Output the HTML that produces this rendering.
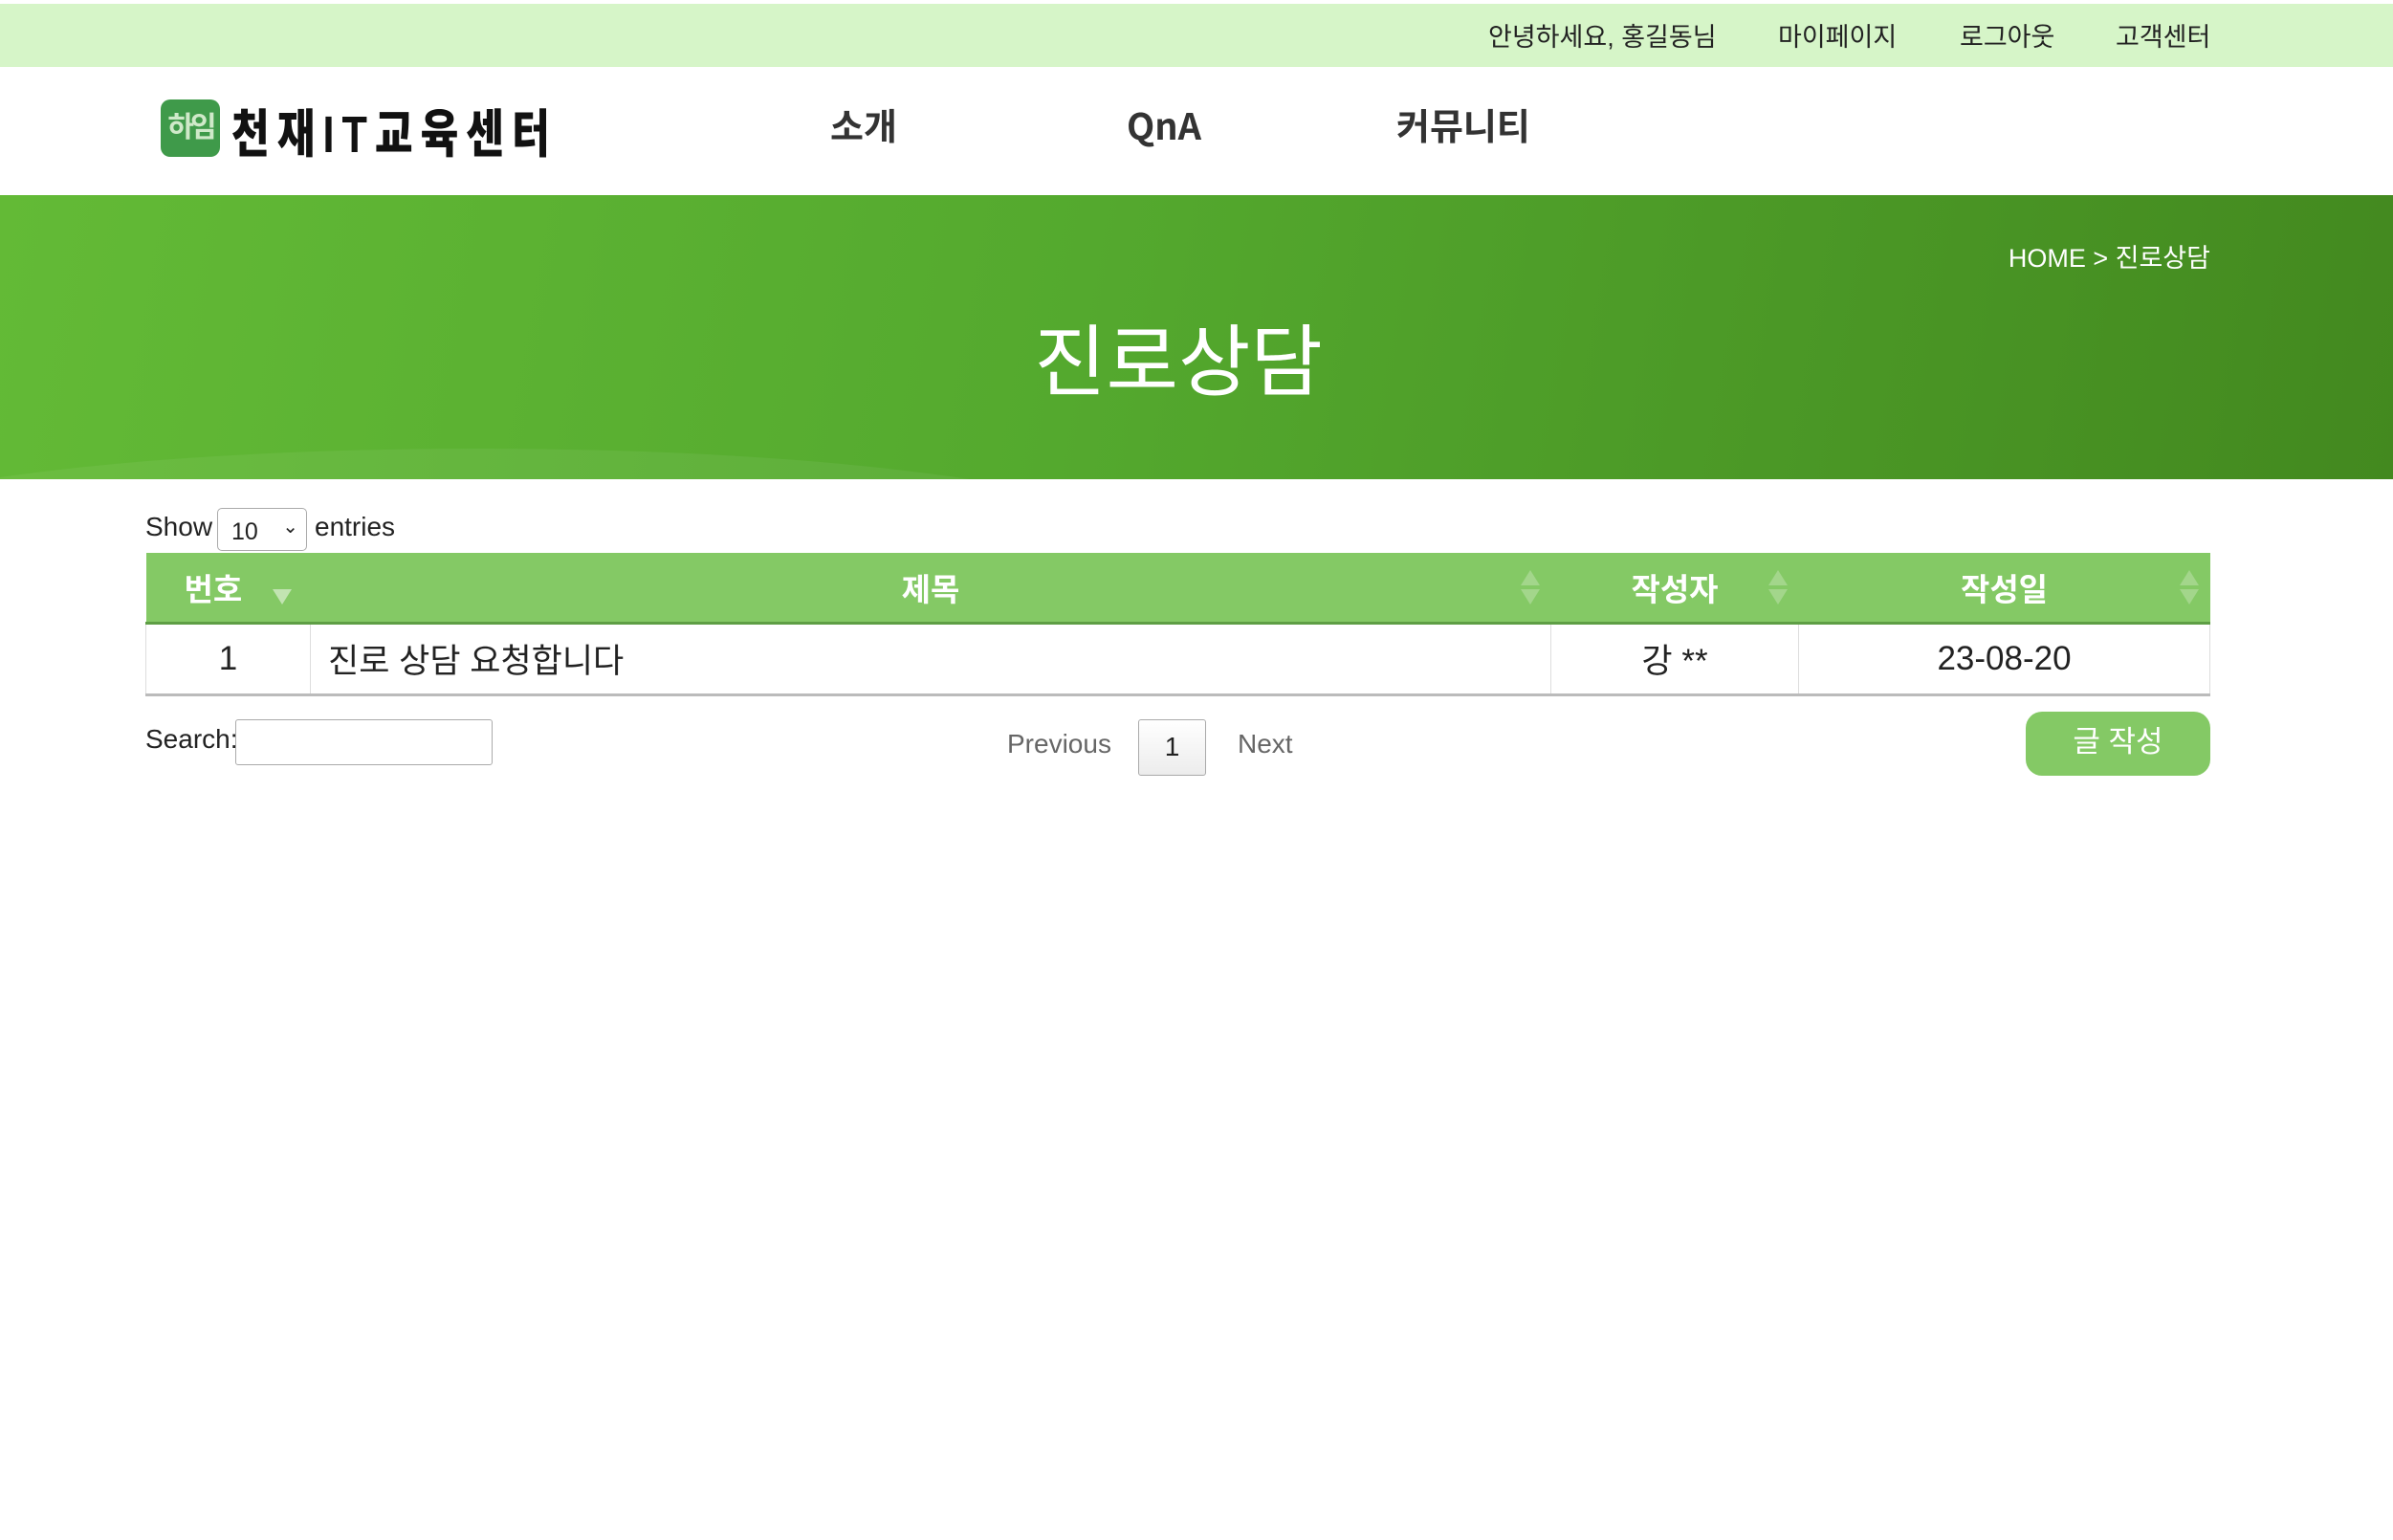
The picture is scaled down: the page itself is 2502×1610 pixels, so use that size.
<!DOCTYPE html>
<html><head><meta charset="utf-8"><style>
*{margin:0;padding:0;box-sizing:border-box}
body{width:2502px;height:1610px;background:#fff;font-family:"Liberation Sans","Noto Sans CJK KR",sans-serif;position:relative;overflow:hidden;color:#222}
.a{position:absolute;white-space:nowrap}
#top{position:absolute;left:0;top:4px;width:2502px;height:66px;background:#d6f5c8}
#top span{position:absolute;top:13px;font-size:27px;color:#222}
#banner{position:absolute;left:0;top:204px;width:2502px;height:297px;background:linear-gradient(100deg,#63ba36 0%,#54a92e 45%,#43891f 100%);overflow:hidden}
.nav{position:absolute;top:105px;height:50px;line-height:50px;font-size:38px;font-weight:bold;color:#333;font-family:"Noto Sans CJK KR","Liberation Sans",sans-serif}
table{position:absolute;left:152px;top:578px;width:2159px;border-collapse:collapse}
th{background:#84c965;color:#fff;font-size:33px;height:73px;border-bottom:3px solid #5e9e45;position:relative}
td{height:75px;font-size:35px;border:1.5px solid #ddd;text-align:center}
tr:last-child td{border-bottom:3px solid #bbb}
.s{position:absolute;right:12px;top:18px;width:0;height:0;border-left:10px solid transparent;border-right:10px solid transparent;border-bottom:16px solid rgba(255,255,255,.25)}
.s2{position:absolute;right:12px;top:38px;width:0;height:0;border-left:10px solid transparent;border-right:10px solid transparent;border-top:16px solid rgba(255,255,255,.25)}
</style></head><body>
<div id="top">
<span style="left:1556px">안녕하세요, 홍길동님</span>
<span style="left:1859px">마이페이지</span>
<span style="left:2049px">로그아웃</span>
<span style="left:2212px">고객센터</span>
</div>
<div class="a" style="left:168px;top:104px;width:62px;height:60px;background:#3f9a4a;border-radius:10px;color:#cfe9c9;font-size:30px;font-weight:bold;line-height:60px;text-align:center;letter-spacing:-4px">하임</div>
<div class="a" style="left:242px;top:96px;font-size:54px;font-weight:900;color:#111;letter-spacing:10px;transform:scaleX(0.8);transform-origin:left">천재IT교육센터</div>
<div class="nav" style="left:868px">소개</div>
<div class="nav" style="left:1178px">QnA</div>
<div class="nav" style="left:1460px">커뮤니티</div>
<div id="banner">
<div class="a" style="left:-200px;top:265px;width:1400px;height:200px;border-radius:50%;background:rgba(255,255,255,.06)"></div>
<div class="a" style="right:191px;top:44px;font-size:27px;color:#fff">HOME &gt; 진로상담</div>
<div class="a" style="left:0;width:2464px;text-align:center;top:108px;font-size:82px;color:#fff">진로상담</div>
</div>
<div class="a" style="left:152px;top:535px;font-size:28px">Show</div>
<div class="a" style="left:227px;top:531px;width:94px;height:45px;border:1.5px solid #aaa;border-radius:5px;font-size:25px;padding:10px 0 0 14px">10<span style="position:absolute;right:8px;top:6px;font-size:20px">⌄</span></div>
<div class="a" style="left:329px;top:535px;font-size:28px">entries</div>
<table>
<tr><th style="width:172px;text-align:left;padding-left:40px">번호<span class="s2" style="border-top-color:rgba(255,255,255,.5);right:20px"></span></th><th style="width:1297px">제목<span class="s"></span><span class="s2"></span></th><th style="width:259px">작성자<span class="s"></span><span class="s2"></span></th><th>작성일<span class="s"></span><span class="s2"></span></th></tr>
<tr><td>1</td><td style="text-align:left;padding-left:18px">진로 상담 요청합니다</td><td>강 **</td><td>23-08-20</td></tr>
</table>
<div class="a" style="left:152px;top:757px;font-size:28px">Search:</div>
<div class="a" style="left:246px;top:752px;width:269px;height:48px;border:1.5px solid #aaa;border-radius:3px"></div>
<div class="a" style="left:1053px;top:762px;font-size:28px;color:#666">Previous</div>
<div class="a" style="left:1190px;top:752px;width:71px;height:59px;border:1.5px solid #aaa;border-radius:3px;background:linear-gradient(#fff,#ececec);font-size:28px;text-align:center;line-height:56px">1</div>
<div class="a" style="left:1294px;top:762px;font-size:28px;color:#666">Next</div>
<div class="a" style="left:2118px;top:744px;width:193px;height:67px;background:#84c965;border-radius:17px;color:#fff;font-size:31px;text-align:center;line-height:64px">글 작성</div>
</body></html>
